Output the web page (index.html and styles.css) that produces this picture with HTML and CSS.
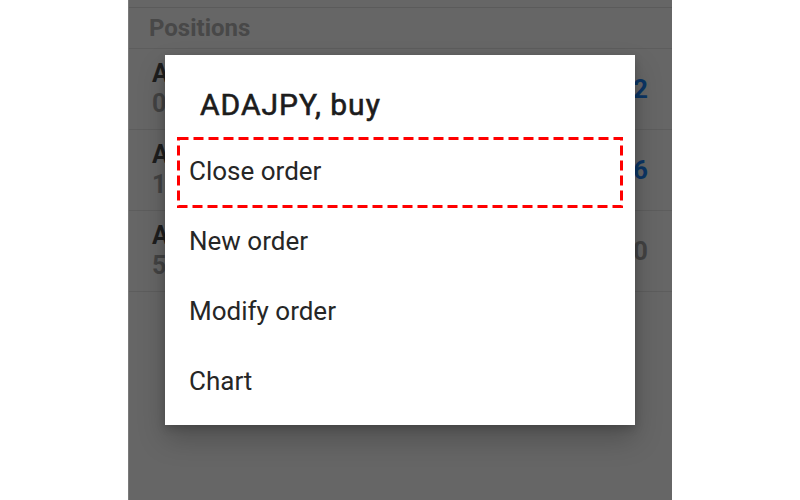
FILE: index.html
```html
<!DOCTYPE html>
<html lang="en">
<head>
<meta charset="utf-8">
<title>Positions</title>
<link rel="stylesheet" href="styles.css">
</head>
<body>
<div class="stage">
  <div class="phone">
    <div class="topbar"></div>
    <div class="section-head">Positions</div>
    <div class="rows">
      <div class="row">
        <div class="row-left">
          <div class="sym">A</div>
          <div class="vol">0</div>
        </div>
        <div class="pl blue">2</div>
      </div>
      <div class="row">
        <div class="row-left">
          <div class="sym">A</div>
          <div class="vol">1</div>
        </div>
        <div class="pl blue">6</div>
      </div>
      <div class="row">
        <div class="row-left">
          <div class="sym">A</div>
          <div class="vol">5</div>
        </div>
        <div class="pl grey">0</div>
      </div>
    </div>

    <div class="dialog">
      <div class="dialog-title">ADAJPY, buy</div>
      <ul class="menu">
        <li class="menu-item highlighted">
          Close order
          <svg class="dash-box" width="446" height="71" viewBox="0 0 446 71">
            <rect x="1.5" y="1.5" width="443" height="68" fill="none" stroke="#ff0000" stroke-width="3" stroke-dasharray="10 5"/>
          </svg>
        </li>
        <li class="menu-item">New order</li>
        <li class="menu-item">Modify order</li>
        <li class="menu-item">Chart</li>
      </ul>
    </div>
  </div>
</div>
</body>
</html>
```
FILE: styles.css
```css
* { box-sizing: border-box; }
html, body { margin: 0; padding: 0; }
body {
  background: #ffffff;
  font-family: Roboto, "Noto Sans", "Liberation Sans", sans-serif;
  width: 800px;
  height: 500px;
  overflow: hidden;
}
.stage {
  display: flex;
  justify-content: center;
  height: 500px;
}
.phone {
  position: relative;
  width: 544px;
  height: 500px;
  background: #666666;
  border-left: 1px solid #7a7a7a;
  overflow: hidden;
}
.topbar {
  height: 8px;
  border-bottom: 1px solid #5b5b5b;
}
.section-head {
  height: 41px;
  padding: 5px 0 0 20px;
  font-size: 24px;
  font-weight: 700;
  line-height: 30px;
  color: #484848;
  border-bottom: 1px solid #5d5d5d;
}
.rows { display: flex; flex-direction: column; }
.row {
  height: 81px;
  display: flex;
  justify-content: space-between;
  align-items: center;
  padding: 0 24px 0 23px;
  border-bottom: 1px solid #5d5d5d;
}
.row-left {
  display: flex;
  flex-direction: column;
  gap: 4px;
}
.sym {
  font-size: 25px;
  font-weight: 700;
  line-height: 26px;
  color: #1e1e1e;
}
.vol {
  font-size: 25px;
  font-weight: 700;
  line-height: 26px;
  color: #434343;
}
.pl {
  font-size: 26px;
  font-weight: 700;
}
.pl.blue { color: #0b3564; }
.pl.grey { color: #424242; }

.dialog {
  position: absolute;
  left: 36px;
  top: 55px;
  width: 470px;
  height: 370px;
  background: #ffffff;
  box-shadow: 0 14px 26px rgba(0,0,0,0.22), 0 3px 8px rgba(0,0,0,0.18);
  padding: 34px 0 9px 0;
}
.dialog-title {
  height: 47px;
  padding-left: 35px;
  font-size: 30px;
  font-weight: 400;
  line-height: 32px;
  letter-spacing: 1px;
  color: #1c1c1c;
  -webkit-text-stroke: 0.6px #1c1c1c;
}
.menu {
  list-style: none;
  margin: 0;
  padding: 0;
}
.menu-item {
  position: relative;
  height: 70px;
  display: flex;
  align-items: center;
  padding-left: 24px;
  font-size: 26px;
  line-height: 32px;
  color: #262626;
}
.dash-box {
  position: absolute;
  left: 12px;
  top: 1px;
}
```
